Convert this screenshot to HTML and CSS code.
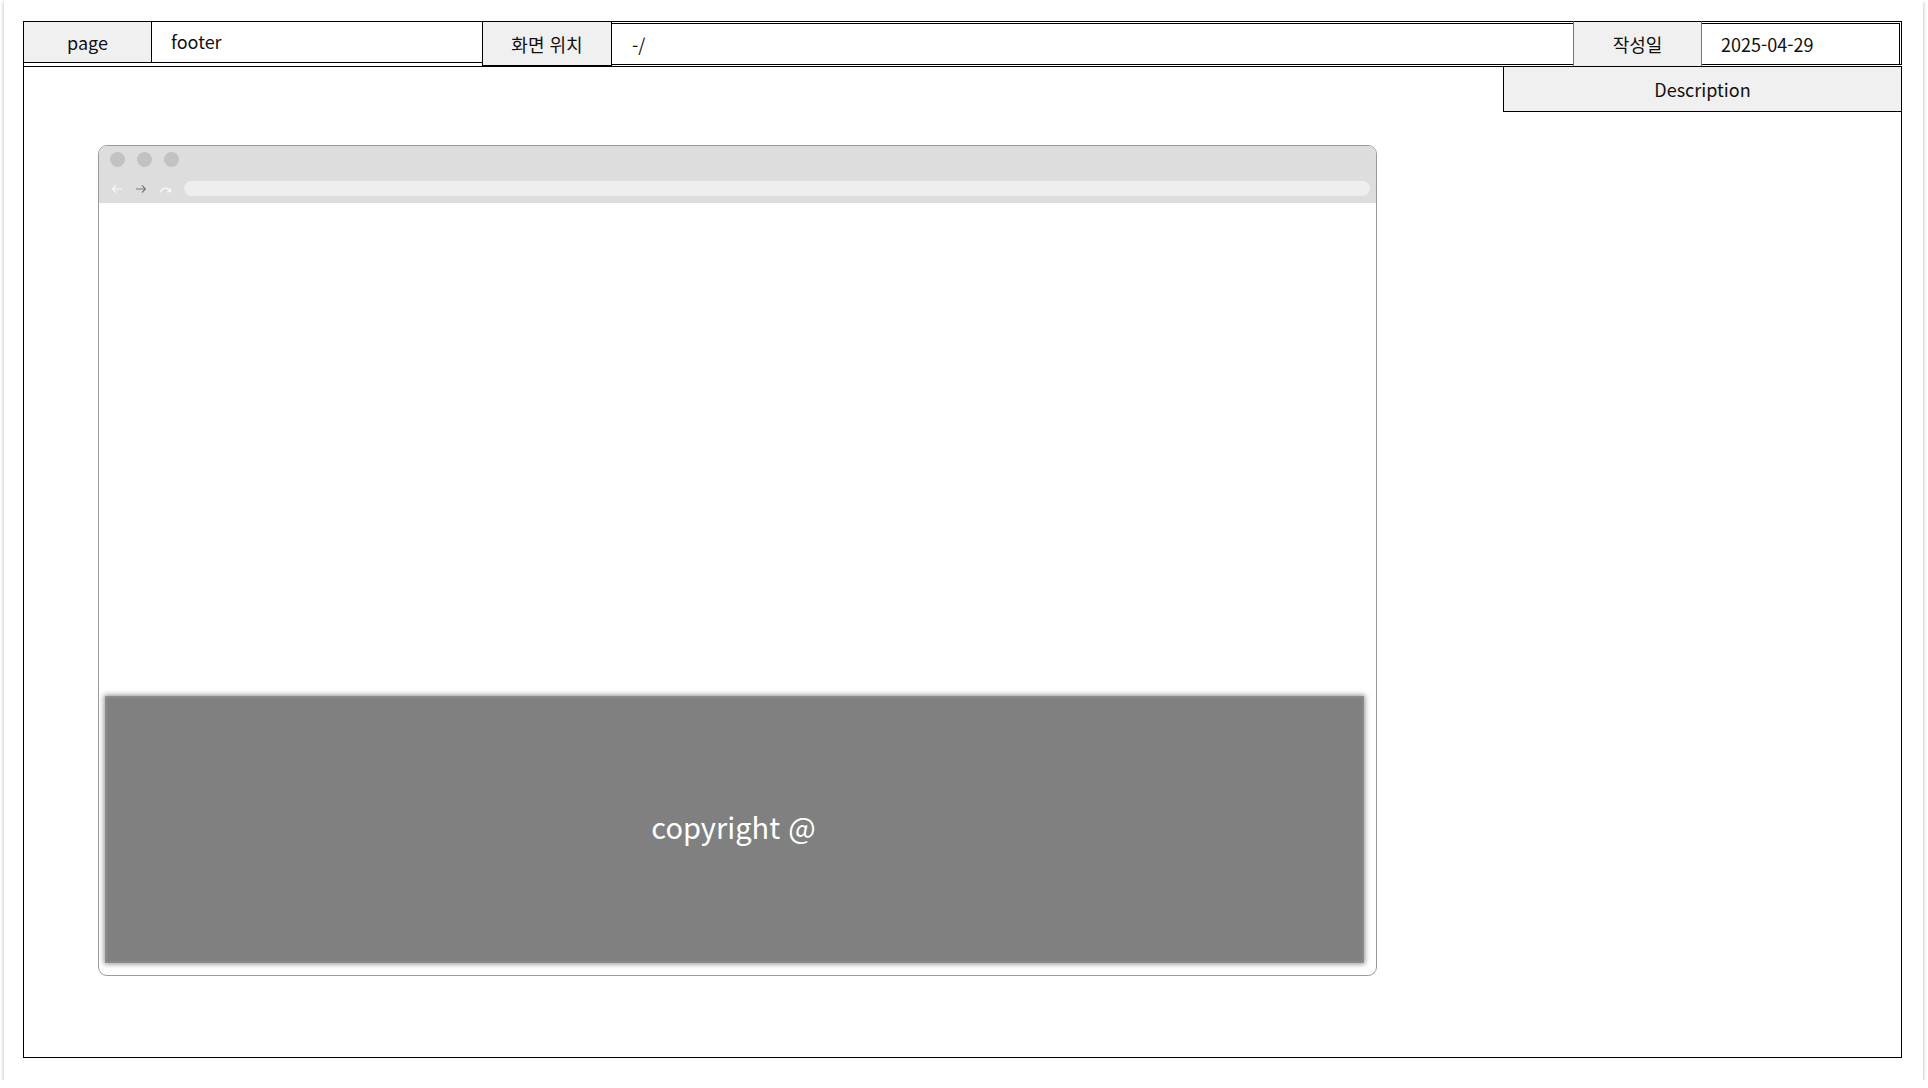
FILE: index.html
```html
<!DOCTYPE html>
<html lang="ko">
<head>
<meta charset="utf-8">
<title>footer</title>
<link rel="stylesheet" href="styles.css">
</head>
<body>
<div class="paper">
  <div class="sheet">
    <div class="header">
      <div class="cell label page-label">page</div>
      <div class="cell value page-value">footer</div>
      <div class="cell label tall loc-label">화면 위치</div>
      <div class="cell value dbl loc-value">-/</div>
      <div class="cell label tall gray-sides date-label">작성일</div>
      <div class="cell value dbl date-value">2025-04-29</div>
    </div>
    <div class="content">
      <div class="desc-row">
        <div class="desc">Description</div>
      </div>
      <div class="browser">
        <div class="chrome">
          <div class="dots">
            <span class="dot"></span><span class="dot"></span><span class="dot"></span>
          </div>
          <div class="navrow">
            <svg class="nav" width="12" height="12" viewBox="0 0 12 12"><path d="M11 6H1.5M5 2.5L1.5 6 5 9.5" fill="none" stroke="#fafafa" stroke-width="1.1"/></svg>
            <svg class="nav" width="12" height="12" viewBox="0 0 12 12"><path d="M1 6h9.5M7 2.5L10.5 6 7 9.5" fill="none" stroke="#7a7a7a" stroke-width="1.1"/></svg>
            <svg class="nav" width="13" height="12" viewBox="0 0 13 12"><path d="M1.5 9.5C2 5 8 3.5 11 8" fill="none" stroke="#fafafa" stroke-width="1.4"/><path d="M8.2 8.6L11.3 8.6 11.6 5.4" fill="none" stroke="#fafafa" stroke-width="1.2"/></svg>
            <div class="address"></div>
          </div>
        </div>
        <div class="viewport">
          <div class="footer-block">copyright @</div>
        </div>
      </div>
    </div>
  </div>
</div>
</body>
</html>
```
FILE: styles.css
```css
html, body {
  margin: 0;
  padding: 0;
  background: #ffffff;
}

body {
  font-family: "Noto Sans CJK KR", "Noto Sans", sans-serif;
  color: #111;
  overflow: hidden;
}

.paper {
  margin: 0 5px 0 4px;
  height: 1080px;
  background: #fff;
  box-shadow: 0 2px 4px rgba(0, 0, 0, 0.3);
  padding: 21px 0 0 19px;
  box-sizing: border-box;
}

.sheet {
  width: 1879px;
  height: 1037px;
  display: flex;
  flex-direction: column;
}

.header {
  display: flex;
  align-items: flex-start;
  height: 45px;
  border-left: 1px solid #000;
  flex: none;
}

.cell {
  box-sizing: border-box;
  font-size: 18px;
  display: flex;
  align-items: center;
  white-space: nowrap;
}

.label {
  background: #f0f0f0;
  justify-content: center;
}

.page-label {
  width: 128px;
  height: 42px;
  border-top: 1px solid #000;
  border-bottom: 1px solid #000;
  border-right: 1px solid #000;
  padding-bottom: 1px;
}

.page-value {
  width: 330px;
  height: 42px;
  padding-left: 19px;
  border-top: 1px solid #000;
  border-bottom: 1px solid #000;
  padding-bottom: 2px;
}

.tall {
  height: 45px;
  border: 1px solid #000;
  padding-top: 1px;
}

.loc-label {
  width: 130px;
}

.dbl {
  height: 44px;
  border-top: 3px double #000;
  border-bottom: 1px solid #000;
  padding-top: 0;
}

.loc-value {
  flex: 1;
  padding-left: 20px;
  padding-top: 1px;
}

.gray-sides {
  border-left-color: #777;
  border-right-color: #777;
  border-bottom: none;
}

.date-label {
  width: 129px;
  padding-top: 0;
}

.date-value {
  width: 200px;
  padding-left: 19px;
  border-right: 3px double #000;
}

.content {
  flex: 1;
  border: 1px solid #000;
  display: flex;
  flex-direction: column;
}

.desc-row {
  display: flex;
  justify-content: flex-end;
}

.desc {
  width: 398px;
  height: 45px;
  box-sizing: border-box;
  background: #f0f0f0;
  border-left: 1px solid #000;
  border-bottom: 1px solid #000;
  font-size: 18px;
  display: flex;
  align-items: center;
  justify-content: center;
}

.browser {
  margin: 33px 0 0 74px;
  width: 1279px;
  height: 831px;
  box-sizing: border-box;
  border: 1px solid #9a9a9a;
  border-radius: 9px;
  overflow: hidden;
  display: flex;
  flex-direction: column;
  background: #fff;
}

.chrome {
  height: 57px;
  background: #dddddd;
  flex: none;
  padding: 6px 6px 0 11px;
  box-sizing: border-box;
}

.dots {
  display: flex;
  gap: 12px;
  height: 15px;
}

.dot {
  width: 15px;
  height: 15px;
  border-radius: 50%;
  background: #c2c2c2;
}

.navrow {
  display: flex;
  align-items: center;
  gap: 12px;
  margin-top: 14px;
  padding-left: 1px;
}

.nav {
  flex: none;
  display: block;
}

.address {
  flex: 1;
  height: 15px;
  border-radius: 8px;
  background: #eeeeee;
}

.viewport {
  flex: 1;
  display: flex;
  flex-direction: column;
  justify-content: flex-end;
  padding: 0 12px 12px 6px;
}

.footer-block {
  height: 267px;
  background: #808080;
  box-shadow: 0 0 5px 1px rgba(128, 128, 128, 0.85), inset 0 0 3px 1px rgba(160, 160, 160, 0.6);
  color: #fff;
  font-size: 29px;
  display: flex;
  align-items: center;
  justify-content: center;
  padding-bottom: 8px;
  padding-right: 2px;
  box-sizing: border-box;
}
```
